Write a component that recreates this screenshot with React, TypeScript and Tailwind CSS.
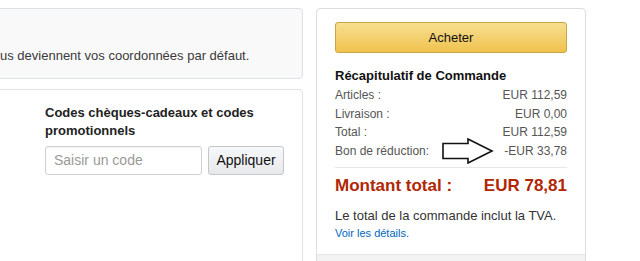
import React from "react";

export default function App() {
  const font = { fontFamily: '"Liberation Sans", Arial, sans-serif' };
  return (
    <div
      className="w-[640px] h-[261px] overflow-hidden bg-white flex items-start text-[#333]"
      style={font}
    >
      {/* Left column */}
      <div className="w-[341px] ml-[-38px] shrink-0 flex flex-col pt-[8px] gap-[10px]">
        <div className="h-[71px] rounded-[4px] border border-[#dde1e4] bg-[#f9f9f9] pl-[37px] pt-[38px] text-[13px] leading-[18px] text-[#3a3a3a]">
          us deviennent vos coordonnées par défaut.
        </div>
        <div className="h-[200px] rounded-[4px] border border-[#e2e2e2] bg-white pl-[82px] pt-[14px]">
          <div className="text-[13px] font-bold leading-[18px] text-[#222] w-[215px]">
            Codes chèques-cadeaux et codes promotionnels
          </div>
          <div className="flex gap-[6px] mt-[6px]">
            <div className="w-[157px] h-[29px] border border-[#d0d0d0] rounded-[3px] bg-white flex items-center pl-[8px] text-[14px] text-[#9a9a9a] shadow-[inset_0_1px_1px_rgba(0,0,0,0.05)]">
              Saisir un code
            </div>
            <div className="w-[76px] h-[29px] border border-[#c4c6ca] rounded-[3px] bg-gradient-to-b from-[#f7f8fa] to-[#e7e9ec] flex items-center justify-center text-[14px] text-[#111]">
              Appliquer
            </div>
          </div>
        </div>
      </div>

      {/* Right panel */}
      <div className="ml-[13px] mt-[8px] w-[270px] shrink-0 rounded-[4px] border border-[#dddddd] bg-white flex flex-col">
        <div className="px-[18px] pt-[13px]">
          <div className="h-[31px] rounded-[3px] border border-[#c9a545] bg-gradient-to-b from-[#f8df8f] to-[#efc24c] flex items-center justify-center text-[13px] text-[#111]">
            Acheter
          </div>
          <div className="mt-[15px] text-[13px] font-bold leading-[16px] text-[#111]">
            Récapitulatif de Commande
          </div>
          <div className="text-[12px] leading-[18.5px] text-[#555] mt-[2px]">
            <div className="flex justify-between">
              <span>Articles :</span>
              <span>EUR 112,59</span>
            </div>
            <div className="flex justify-between">
              <span>Livraison :</span>
              <span>EUR 0,00</span>
            </div>
            <div className="flex justify-between">
              <span>Total :</span>
              <span>EUR 112,59</span>
            </div>
            <div className="flex justify-between items-center relative">
              <span>Bon de réduction:</span>
              <span>-EUR 33,78</span>
              <svg
                className="absolute left-[107px] top-[-4px]"
                width="52"
                height="26"
                viewBox="0 0 52 26"
              >
                <polygon
                  points="1,5.5 26,5.5 26,1 50,13 26,25 26,20.5 1,20.5"
                  fill="white"
                  stroke="#111"
                  strokeWidth="1.6"
                  strokeLinejoin="miter"
                />
              </svg>
            </div>
          </div>
          <div className="mt-[7px] border-t border-[#e7e7e7]" />
          <div className="flex justify-between items-center mt-[7px] text-[17px] font-bold leading-[22px] text-[#b12704]">
            <span>Montant total :</span>
            <span>EUR 78,81</span>
          </div>
          <div className="mt-[11px] text-[13px] leading-[16px] text-[#333]">
            Le total de la commande inclut la TVA.
          </div>
          <div className="text-[11px] leading-[16px] text-[#0066c0] mt-[1px]">
            Voir les détails.
          </div>
        </div>
        <div className="mt-[13px] border-t border-[#e7e7e7] bg-[#f3f3f3] h-[30px]" />
      </div>
    </div>
  );
}
